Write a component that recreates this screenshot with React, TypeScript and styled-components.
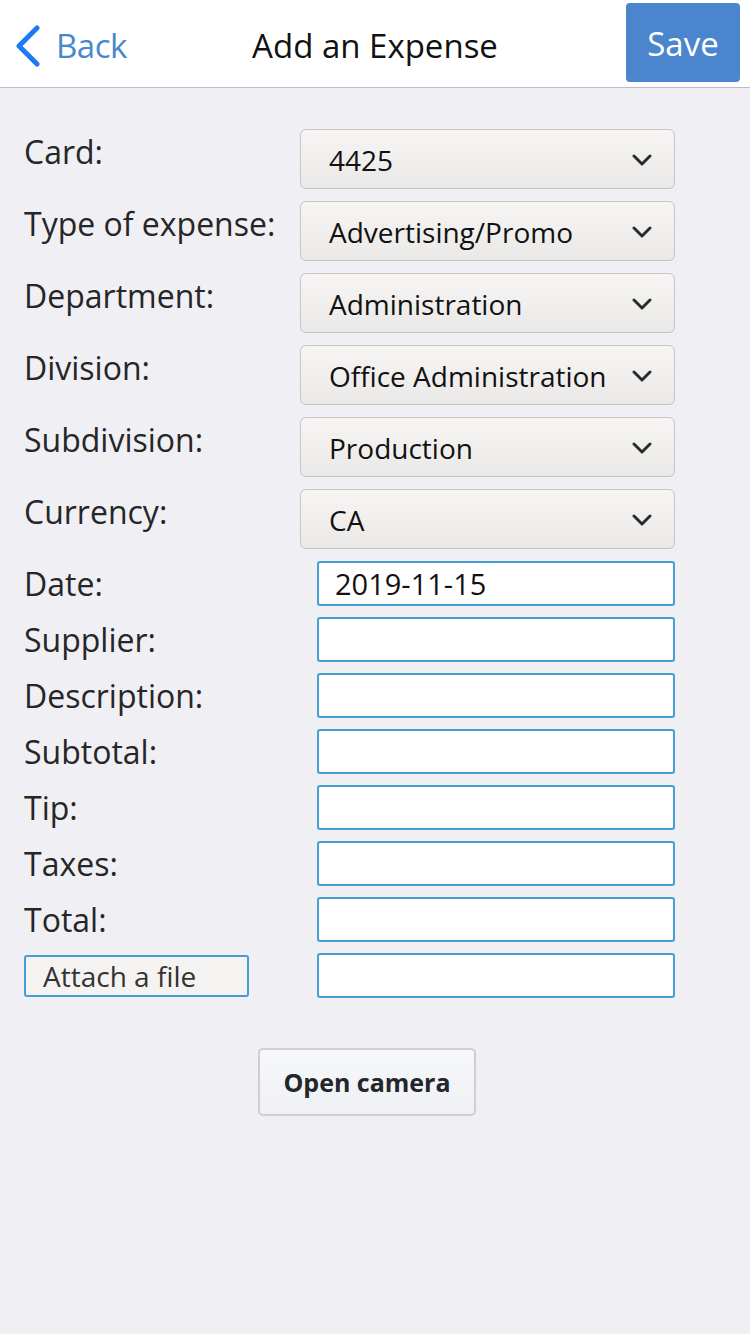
import React from "react";
import styled, { createGlobalStyle } from "styled-components";

const Global = createGlobalStyle`
  *, *::before, *::after { box-sizing: border-box; }
  html, body { margin: 0; padding: 0; }
  body {
    background: #efeff4;
    font-family: "Open Sans", "Noto Sans", sans-serif;
    width: 750px;
    min-height: 1334px;
  }
`;

const Page = styled.div`
  width: 750px;
  min-height: 1334px;
  background: #efeff4;
`;

const Header = styled.header`
  height: 88px;
  background: #ffffff;
  border-bottom: 1px solid #bdbdc0;
  display: grid;
  grid-template-columns: 1fr auto 1fr;
  align-items: center;
`;

const BackLink = styled.div`
  display: flex;
  align-items: center;
  gap: 14px;
  padding-left: 14px;
  color: #4a88cc;
  font-size: 33px;
  letter-spacing: -0.5px;
  padding-top: 4px;
`;

const Title = styled.h1`
  margin: 0;
  font-weight: 400;
  font-size: 33px;
  color: #111;
  padding-top: 4px;
`;

const SaveButton = styled.button`
  justify-self: end;
  margin-right: 10px;
  width: 114px;
  height: 79px;
  margin-top: -3px;
  background: #4a85cd;
  border: none;
  border-radius: 4px;
  color: #fff;
  font-family: "Open Sans", sans-serif;
  font-size: 33px;
  padding: 3px 0 0;
`;

const Form = styled.div`
  padding: 41px 75px 0 24px;
  display: flex;
  flex-direction: column;
  gap: 12px;
`;

const Row = styled.div<{ $center?: boolean }>`
  display: grid;
  grid-template-columns: 276px 1fr;
  align-items: ${(p) => (p.$center ? "center" : "start")};
`;

const InputRows = styled.div`
  display: flex;
  flex-direction: column;
  gap: 11px;
`;

const Label = styled.div<{ $offset?: number }>`
  font-size: 32px;
  color: #262626;
  line-height: 40px;
  padding-top: ${(p) => p.$offset ?? 0}px;
  white-space: nowrap;
`;

const Select = styled.div`
  height: 60px;
  border: 1px solid #c9c5c0;
  border-radius: 6px;
  background: linear-gradient(#f6f5f4, #ebe9e7);
  display: flex;
  align-items: center;
  justify-content: space-between;
  padding: 2px 22px 0 28px;
  font-size: 28px;
  color: #111;
  white-space: nowrap;
`;

const Input = styled.div`
  margin-left: 17px;
  height: 45px;
  border: 2px solid #44a0d2;
  border-radius: 3px;
  background: #fff;
  display: flex;
  align-items: center;
  padding: 0 16px;
  font-size: 29px;
  color: #111;
`;

const AttachButton = styled.button`
  display: block;
  width: 225px;
  height: 42px;
  border: 2px solid #44a0d2;
  border-radius: 3px;
  background: #f4f3f2;
  font-family: "Open Sans", sans-serif;
  font-size: 28px;
  line-height: 36px;
  color: #333;
  text-align: left;
  padding: 0 0 0 17px;
`;

const CameraWrap = styled.div`
  display: flex;
  justify-content: center;
  padding: 50px 16px 0 0;
`;

const CameraButton = styled.button`
  width: 218px;
  height: 68px;
  border: 2px solid #cdcfd2;
  border-radius: 5px;
  background: linear-gradient(#f7f8fa, #eef0f3);
  font-family: "Open Sans", sans-serif;
  font-weight: 700;
  font-size: 25px;
  color: #23272b;
  padding: 0;
`;

const Chevron = () => (
  <svg width="20" height="12" viewBox="0 0 20 12">
    <path d="M2 2 L10 10 L18 2" fill="none" stroke="#2b2b2b" strokeWidth="3" strokeLinecap="round" strokeLinejoin="round" />
  </svg>
);

const BackChevron = () => (
  <svg width="28" height="42" viewBox="0 0 28 42">
    <path d="M23 3 L5 21 L23 39" fill="none" stroke="#1a7cf5" strokeWidth="5" strokeLinecap="round" strokeLinejoin="round" />
  </svg>
);

const selects = [
  ["Card:", "4425"],
  ["Type of expense:", "Advertising/Promo"],
  ["Department:", "Administration"],
  ["Division:", "Office Administration"],
  ["Subdivision:", "Production"],
  ["Currency:", "CA"],
];

const inputs = [
  ["Date:", "2019-11-15"],
  ["Supplier:", ""],
  ["Description:", ""],
  ["Subtotal:", ""],
  ["Tip:", ""],
  ["Taxes:", ""],
  ["Total:", ""],
];

export default function App() {
  return (
    <Page>
      <Global />
      <Header>
        <BackLink>
          <BackChevron />
          Back
        </BackLink>
        <Title>Add an Expense</Title>
        <SaveButton>Save</SaveButton>
      </Header>
      <Form>
        {selects.map(([l, v]) => (
          <Row key={l}>
            <Label $offset={3}>{l}</Label>
            <Select>
              <span>{v}</span>
              <Chevron />
            </Select>
          </Row>
        ))}
        <InputRows>
          {inputs.map(([l, v]) => (
            <Row key={l} $center>
              <Label>{l}</Label>
              <Input>{v}</Input>
            </Row>
          ))}
          <Row $center>
            <div>
              <AttachButton>Attach a file</AttachButton>
            </div>
            <Input />
          </Row>
        </InputRows>
      </Form>
      <CameraWrap>
        <CameraButton>Open camera</CameraButton>
      </CameraWrap>
    </Page>
  );
}
